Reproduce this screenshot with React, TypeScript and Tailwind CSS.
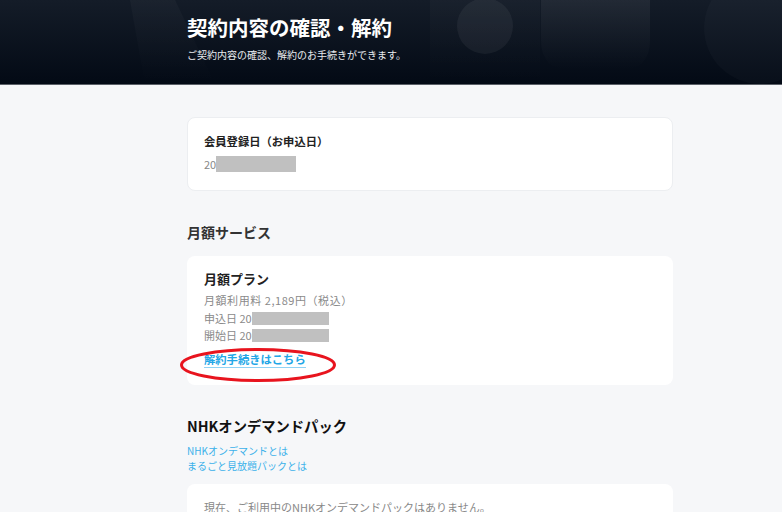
import React from "react";

function HeaderDecor() {
  return (
    <svg className="absolute inset-0 h-full w-full" viewBox="0 0 782 84" preserveAspectRatio="none">
      <defs>
        <linearGradient id="hg" x1="0" y1="0" x2="0" y2="1">
          <stop offset="0" stopColor="#141c28" />
          <stop offset="1" stopColor="#030a15" />
        </linearGradient>
        <linearGradient id="sg" x1="0" y1="0" x2="0" y2="1">
          <stop offset="0" stopColor="#ffffff" stopOpacity="0.06" />
          <stop offset="1" stopColor="#ffffff" stopOpacity="0" />
        </linearGradient>
      </defs>
      <rect width="782" height="84" fill="url(#hg)" />
      <path d="M130 0 L175 0 L215 84 L145 84 Z" fill="url(#sg)" opacity="0.5" />
      <rect x="430" y="0" width="110" height="84" fill="url(#sg)" opacity="0.4" />
      <circle cx="485" cy="26" r="28" fill="#ffffff" fillOpacity="0.05" />
      <path d="M541 0 H650 V40 Q650 70 620 70 H571 Q541 70 541 40 Z" fill="url(#sg)" />
      <circle cx="760" cy="28" r="56" fill="#ffffff" fillOpacity="0.025" />
    </svg>
  );
}

export default function App() {
  const font = { fontFamily: '"Noto Sans CJK JP", "Noto Sans", sans-serif' };
  return (
    <div className="min-h-[512px] w-[782px] bg-[#f6f7f9]" style={font}>
      <header className="relative h-[85px] overflow-hidden border-b border-[#5b6068]">
        <HeaderDecor />
        <div className="relative pl-[187px] pt-[12px]">
          <h1 className="text-[20.5px] font-bold leading-[30px] text-white">契約内容の確認・解約</h1>
          <p className="mt-[6px] text-[10px] leading-[14px] text-[#e8ebef]">ご契約内容の確認、解約のお手続きができます。</p>
        </div>
      </header>

      <main className="mx-[187px] w-[486px] pt-[32px]">
        <section className="rounded-[8px] border border-[#eceef1] bg-white px-[16px] pb-[18px] pt-[14px]">
          <h2 className="text-[11.3px] font-bold leading-[18px] text-[#222]">会員登録日（お申込日）</h2>
          <div className="mt-[6px] flex items-center text-[11px] leading-[16px] text-[#888]">
            <span>20</span>
            <span className="h-[16px] w-[80px] bg-[#c0c0c0]" />
          </div>
        </section>

        <h2 className="mt-[31px] text-[14px] font-bold leading-[20px] text-[#333]">月額サービス</h2>

        <section className="relative mt-[14px] rounded-[8px] bg-white px-[17px] pb-[16px] pt-[13px]">
          <h3 className="text-[13px] font-bold leading-[20px] text-[#222]">月額プラン</h3>
          <div className="mt-[3px] text-[11px] leading-[17.5px] text-[#8a8a8a]">
            <p className="tracking-[0.05em]">月額利用料 2,189円（税込）</p>
            <p className="flex items-center">
              <span>申込日 20</span>
              <span className="h-[13px] w-[77px] bg-[#c0c0c0]" />
            </p>
            <p className="flex items-center">
              <span>開始日 20</span>
              <span className="h-[13px] w-[77px] bg-[#c0c0c0]" />
            </p>
          </div>
          <a className="mt-[3px] inline-block border-b border-[#8fd3f5] text-[11.3px] font-bold leading-[15px] text-[#22a6e6]">解約手続きはこちら</a>
          <svg className="absolute left-[-8px] top-[91px]" width="158" height="36" viewBox="0 0 158 36">
            <ellipse cx="79" cy="18" rx="76.5" ry="15.5" fill="none" stroke="#e8141e" strokeWidth="3" />
          </svg>
        </section>

        <h2 className="mt-[31px] text-[14.3px] font-bold leading-[20px] text-[#111]">NHKオンデマンドパック</h2>
        <div className="mt-[7px] text-[10px] leading-[15px] text-[#3bb1ea]">
          <p>NHKオンデマンドとは</p>
          <p>まるごと見放題パックとは</p>
        </div>

        <section className="mt-[11px] rounded-[8px] bg-white px-[17px] pt-[14px] pb-[16px]">
          <p className="text-[11px] leading-[18px] text-[#888]">現在、ご利用中のNHKオンデマンドパックはありません。</p>
        </section>
      </main>
    </div>
  );
}
